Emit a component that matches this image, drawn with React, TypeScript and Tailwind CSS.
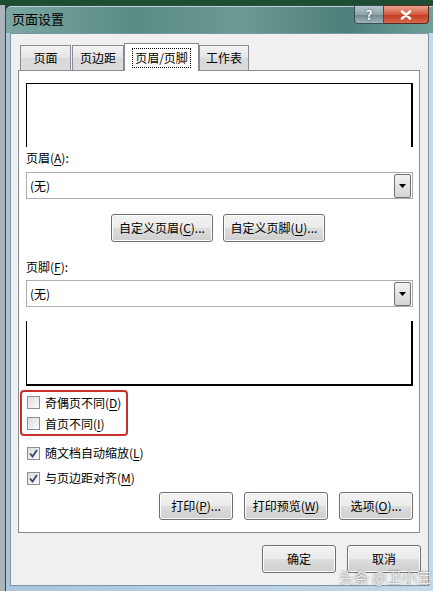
import React from "react";

const font = { fontFamily: '"Noto Sans CJK SC", "Microsoft YaHei", sans-serif' };

function Btn({ children, className = "" }: { children: React.ReactNode; className?: string }) {
	return (
		<div
			className={`flex items-center justify-center h-[28px] rounded-[3px] border border-[#707070] bg-[linear-gradient(#f2f2f2_0%,#ebebeb_50%,#dddddd_51%,#cfcfcf_100%)] text-[12px] text-black shadow-[inset_0_0_0_1px_#fcfcfc] ${className}`}
		>
			{children}
		</div>
	);
}

function U({ children }: { children: React.ReactNode }) {
	return <span className="underline underline-offset-2">{children}</span>;
}

function Select() {
	return (
		<div className="flex items-center h-[27px] w-[387px] border border-[#abadb3] bg-white pl-[3px] pr-[1px]">
			<span className="flex-1 text-[12px]">(无)</span>
			<div className="flex items-center justify-center w-[17px] h-[24px] border border-[#707070] rounded-[2px] bg-[linear-gradient(#f2f2f2,#d4d4d4)]">
				<svg width="7" height="4" viewBox="0 0 7 4">
					<path d="M0 0h7L3.5 4z" fill="#000" />
				</svg>
			</div>
		</div>
	);
}

function Check({ label, checked }: { label: React.ReactNode; checked?: boolean }) {
	return (
		<div className="flex items-center h-[24px] gap-[5px] text-[12px]">
			<div className="flex items-center justify-center w-[13px] h-[13px] border border-[#8e8f8f] bg-[linear-gradient(135deg,#dcdcdc,#fbfbfb)]">
				{checked && (
					<svg width="9" height="9" viewBox="0 0 9 9">
						<path d="M1 4.5L3.5 7.5L8 1" stroke="#33466f" strokeWidth="1.8" fill="none" />
					</svg>
				)}
			</div>
			<span>{label}</span>
		</div>
	);
}

function Tab({ children, active, w }: { children: React.ReactNode; active?: boolean; w: string }) {
	if (active)
		return (
			<div className={`${w} h-[28px] -mb-px relative z-10 flex items-center justify-center bg-white border border-b-0 border-[#898c95] text-[12px]`}>
				<span className="border border-dotted border-black px-[2px] leading-[18px]">{children}</span>
			</div>
		);
	return (
		<div className={`${w} h-[25px] flex items-center justify-center border border-b-0 border-[#898c95] bg-[linear-gradient(#f3f3f3,#e4e4e4_50%,#d9d9d9_51%,#dcdcdc)] text-[12px]`}>
			{children}
		</div>
	);
}

export default function App() {
	return (
		<div className="w-[433px] h-[591px] overflow-hidden bg-[#1f4d34] flex flex-col text-black relative" style={font}>
			<div className="h-[5px] shrink-0" />
			<div className="flex flex-1">
				<div className="w-[5px] bg-[#aab4ba]" />
				<div className="flex-1 flex flex-col rounded-tl-[6px] border border-r-0 border-b-0 border-[#2f4a48] bg-[linear-gradient(90deg,#7aa7a1,#5a8b85_30%,#6c9a94_55%,#4f7f7a_80%,#6e9f99)] shadow-[inset_0_1px_0_#b5d3cf]">
					<div className="h-[27px] flex items-start shrink-0">
						<span className="ml-[6px] mt-[5px] text-[13px] leading-[16px] text-black">页面设置</span>
						<div className="flex-1" />
						<div className="flex mr-[4px] -mt-px">
							<div className="w-[30px] h-[19px] flex items-center justify-center rounded-bl-[4px] border border-[#3b4f55] bg-[linear-gradient(#b6c8cc,#8ea4a9_50%,#6f878d_51%,#9fb4b8)] text-white font-bold text-[13px] [text-shadow:0_0_2px_#233]">
								?
							</div>
							<div className="w-[45px] h-[19px] flex items-center justify-center rounded-br-[4px] border border-l-0 border-[#5a2a22] bg-[linear-gradient(#e8a593,#d4573f_50%,#c0381f_51%,#d66a4c)]">
								<svg width="12" height="10" viewBox="0 0 12 10">
									<path d="M2 1.5L10 8.5M10 1.5L2 8.5" stroke="#fff" strokeWidth="2.6" strokeLinecap="round" />
								</svg>
							</div>
						</div>
					</div>
					<div className="flex-1 flex px-[4px] pb-[5px] bg-[linear-gradient(90deg,#a9c6dc,#c4d9ea)]">
						<div className="flex-1 bg-[#f0f0f0] border border-[#7f93a6] flex flex-col pl-[7px] pr-[7px] pt-[9px]">
							<div className="flex items-end pl-[2px]">
								<Tab w="w-[51px]">页面</Tab>
								<div className="w-[1px]" />
								<Tab w="w-[52px]">页边距</Tab>
								<Tab active w="w-[75px]">页眉/页脚</Tab>
								<Tab w="w-[50px]">工作表</Tab>
							</div>
							<div className="w-[402px] h-[463px] bg-white border border-[#898c95] flex flex-col pl-[7px] pt-[12px]">
								<div className="w-[387px] h-[64px] border-t border-l border-black border-r-2" />
								<div className="mt-[4px] h-[14px] leading-[14px] text-[12px]">
									页眉(<U>A</U>):
								</div>
								<div className="mt-[7px]">
									<Select />
								</div>
								<div className="mt-[15px] flex gap-[10px] pl-[85px]">
									<Btn className="w-[102px]">
										自定义页眉(<U>C</U>)...
									</Btn>
									<Btn className="w-[102px]">
										自定义页脚(<U>U</U>)...
									</Btn>
								</div>
								<div className="mt-[18px] h-[14px] leading-[14px] text-[12px]">
									页脚(<U>F</U>):
								</div>
								<div className="mt-[6px]">
									<Select />
								</div>
								<div className="mt-[14px] w-[387px] h-[65px] border-l border-black border-r-2 border-b-2" />
								<div className="mt-[4px] -ml-[6px] w-[108px] h-[46px] border-2 border-[#c9302c] rounded-[4px] flex flex-col justify-center pl-[5px]">
									<Check label={<>奇偶页不同(<U>D</U>)</>} />
									<Check label={<>首页不同(<U>I</U>)</>} />
								</div>
								<div className="mt-[5px] pl-[1px]">
									<Check checked label={<>随文档自动缩放(<U>L</U>)</>} />
								</div>
								<div className="mt-[1px] pl-[1px]">
									<Check checked label={<>与页边距对齐(<U>M</U>)</>} />
								</div>
								<div className="mt-[2px] flex pl-[133px] gap-[11px]">
									<Btn className="w-[74px]">
										打印(<U>P</U>)...
									</Btn>
									<Btn className="w-[84px]">
										打印预览(<U>W</U>)
									</Btn>
									<Btn className="w-[74px]">
										选项(<U>O</U>)...
									</Btn>
								</div>
							</div>
							<div className="mt-[12px] flex justify-end gap-[11px] pr-[0px]">
								<Btn className="w-[74px] border-[#3c7fb1] shadow-[inset_0_0_0_1px_#6ad0f5,0_0_2px_#6ad0f5]">确定</Btn>
								<Btn className="w-[74px]">取消</Btn>
							</div>
						</div>
					</div>
				</div>
			</div>
			<div className="absolute left-[339px] top-[568px] text-[15px] leading-[18px] text-white/80 [text-shadow:0_0_2px_#555]">
				头条 @卫小宝
			</div>
		</div>
	);
}
